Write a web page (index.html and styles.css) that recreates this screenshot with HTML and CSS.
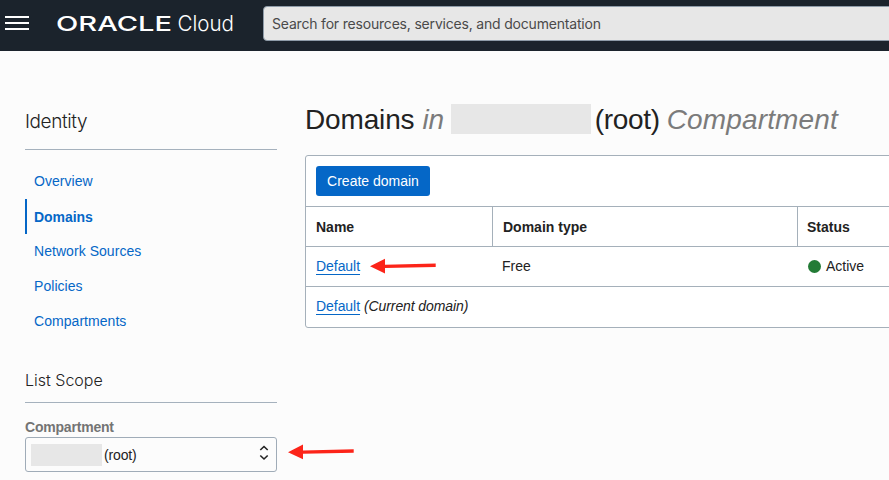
FILE: index.html
```
<!DOCTYPE html>
<html lang="en">
<head>
<meta charset="utf-8">
<title>Domains</title>
<link rel="stylesheet" href="styles.css">
</head>
<body>
<header class="topbar">
  <svg class="menu" width="24" height="16" viewBox="0 0 24 16"><path d="M0 2h24M0 8h24M0 14h24" stroke="#fff" stroke-width="2"/></svg>
  <svg class="logo" width="180" height="30" viewBox="0 0 180 30">
    <text class="brand" x="-1" y="20.800" textLength="116" lengthAdjust="spacingAndGlyphs">ORACLE</text>
    <text class="product" x="120.500" y="20.800" textLength="56.500" lengthAdjust="spacingAndGlyphs">Cloud</text>
  </svg>
  <div class="search">Search for resources, services, and documentation</div>
</header>
<div class="page">
  <aside class="sidebar">
    <h2 class="side-title">Identity</h2>
    <nav class="nav">
      <a class="nav-item">Overview</a>
      <a class="nav-item active">Domains</a>
      <a class="nav-item">Network Sources</a>
      <a class="nav-item">Policies</a>
      <a class="nav-item">Compartments</a>
    </nav>
    <h3 class="scope-title">List Scope</h3>
    <div class="label">Compartment</div>
    <div class="select">
      <span class="mask"></span><span class="root">(root)</span>
      <svg class="chevrons" width="10" height="16" viewBox="0 0 10 16"><path d="M1.3 5 5 1.5 8.7 5M1.3 10.5 5 14 8.7 10.5" fill="none" stroke="#222" stroke-width="1.6"/></svg>
      <svg class="arrow scope-arrow" width="66" height="16" viewBox="0 0 66 16"><path d="M0 8.3 15 .4V6.5L65.700 5.300V8.700L15 9.700V15.300Z" fill="#fc2419"/></svg>
    </div>
  </aside>
  <main class="main">
    <h1 class="title"><span class="t-name">Domains</span><i class="t-in">in</i><span class="title-mask"></span><span class="t-root">(root)</span><i class="t-comp">Compartment</i></h1>
    <section class="card">
      <div class="toolbar"><button class="create">Create domain</button></div>
      <div class="row head"><div class="cell">Name</div><div class="cell">Domain type</div><div class="cell">Status</div></div>
      <div class="row">
        <div class="cell"><a class="link">Default</a><svg class="arrow row-arrow" width="66" height="16" viewBox="0 0 66 16"><path d="M0 8.3 15 .7V6.700L65.700 5.500V8.900L15 9.900V15.500Z" fill="#fc2419"/></svg></div>
        <div class="cell free">Free</div>
        <div class="cell status"><span class="dot"></span>Active</div>
      </div>
      <div class="row last"><div class="cell"><a class="link">Default</a><i class="current">(Current domain)</i></div></div>
    </section>
  </main>
</div>
</body>
</html>
```
FILE: styles.css
```
* { box-sizing: border-box; }
body {
  margin: 0;
  height: 480px;
  overflow: hidden;
  background: #fcfcfc;
  color: #222;
  font: 14px/20px "Liberation Sans", Arial, sans-serif;
}
h1, h2, h3 { margin: 0; font-weight: 400; }

.topbar { display: flex; height: 51px; background: #1b232c; overflow: hidden; }
.menu { flex: none; margin: 15px 0 0 5px; }
.logo { flex: none; margin: 10px 0 0 28px; }
.brand { font: 500 20.500px Inter, sans-serif; fill: #fff; }
.product { font: 300 22px Inter, sans-serif; fill: #fff; }
.search {
  flex: 1;
  height: 35px;
  margin: 6px -10px 0 26px;
  padding: 0 8px;
  border: 1px solid #8e9ba8;
  border-radius: 4px;
  background: #e7e7e7;
  color: #4a4a4a;
  font: 14px/34px Inter, sans-serif;
  letter-spacing: -.19px;
  white-space: nowrap;
}

.page { display: flex; }
.sidebar { flex: none; width: 252px; margin-left: 25px; }
.side-title {
  height: 99px;
  padding-top: 57px;
  border-bottom: 1px solid #a5b1bd;
  font: 300 19px/28px Inter, sans-serif;
  letter-spacing: -.4px;
}
.nav { display: flex; flex-direction: column; padding-top: 14px; }
.nav-item { height: 35px; padding-left: 9px; line-height: 35px; color: #0567c7; letter-spacing: .05px; }
.nav-item.active { border-left: 2px solid #0567c7; padding-left: 7px; font-weight: 700; line-height: 36px; letter-spacing: -.05px; }
.scope-title {
  height: 64px;
  padding-top: 29px;
  border-bottom: 1px solid #a5b1bd;
  font: 300 16px/24px Inter, sans-serif;
}
.label { margin-top: 14px; color: #747474; font-weight: 700; letter-spacing: -.2px; }
.select {
  position: relative;
  display: flex;
  align-items: center;
  height: 35px;
  padding: 0 7px 0 5px;
  border: 1px solid #a0acb8;
  border-radius: 3px;
}
.mask { width: 71px; height: 22px; margin-right: 2px; background: #e7e7e7; }
.root { letter-spacing: -.15px; }
.chevrons { margin: -3px 0 0 auto; }
.arrow { position: absolute; }
.scope-arrow { left: 262px; top: 6px; }

.main { flex: 1; min-width: 0; margin-left: 28px; }
.title { display: flex; align-items: center; height: 104px; padding-top: 32px; font-size: 28px; line-height: 34px; white-space: nowrap; }
.title i { color: #7b7b7b; }
.title span, .title i { flex: none; }
.t-name { letter-spacing: -.15px; }
.t-name, .t-in, .t-root, .t-comp { padding-top: 1px; }
.t-in { margin-left: 8px; letter-spacing: -.2px; }
.title-mask { width: 140px; height: 30px; margin: 0 4px 0 7px; background: #e7e7e7; }
.t-root { letter-spacing: -.35px; }
.t-comp { margin-left: 7px; letter-spacing: .15px; }
.card { margin-right: -10px; border: 1px solid #a5b0ba; border-radius: 3px; background: #fff; }
.toolbar { height: 50px; padding: 10px; }
.create {
  display: block;
  width: 114px;
  height: 30px;
  padding: 0;
  border: 0;
  border-radius: 3px;
  background: #0567c7;
  color: #fff;
  font: inherit;
}
.row { display: grid; grid-template-columns: 186px 305px 1fr; height: 40px; border-top: 1px solid #a5b0ba; }
.row.last { display: flex; height: 41px; padding-bottom: 2px; }
.cell { position: relative; display: flex; align-items: center; padding-left: 10px; }
.head { font-weight: 700; }
.head .cell + .cell { border-left: 1px solid #a5b0ba; }
.head .cell:last-child { padding-left: 9px; }
.link { color: #0567c7; line-height: 16px; border-bottom: 1px solid #0567c7; letter-spacing: -.05px; }
.row-arrow { left: 64px; top: 11px; }
.free, .status { padding-bottom: 1px; }
.status { padding-left: 11px; }
.dot { width: 13px; height: 13px; margin-right: 5px; border-radius: 50%; background: #237b36; }
.current { margin-left: 4px; letter-spacing: -.1px; }
```
